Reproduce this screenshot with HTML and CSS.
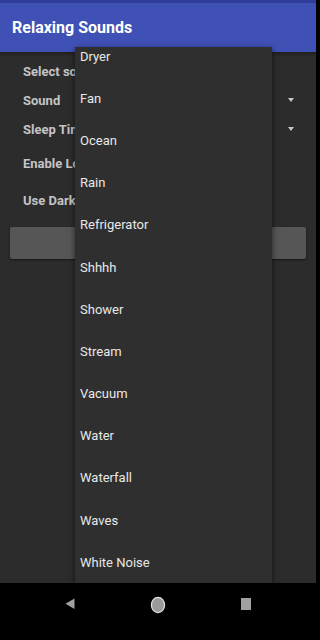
FILE: index.html
```html
<!DOCTYPE html>
<html lang="en">
<head>
  <meta charset="UTF-8" />
  <meta name="viewport" content="width=device-width, initial-scale=1.0" />
  <title>Relaxing Sounds</title>
  <link rel="stylesheet" href="styles.css">
</head>
<body>
  <div class="app">
    <div class="status"></div>
    <header class="toolbar">Relaxing Sounds</header>
    <div class="settings">
      <div class="label">Select sound and timer</div>
      <div></div>
      <div class="label">Sound</div>
      <span class="arrow"></span>
      <div class="label">Sleep Timer</div>
      <span class="arrow"></span>
      <div class="label">Enable Looping</div>
      <div></div>
      <div class="label">Use Dark Theme</div>
      <div></div>
    </div>
    <button class="play-btn"></button>

    <div class="popup">
      <ul class="sound-list">
        <li>Dryer</li>
        <li>Fan</li>
        <li>Ocean</li>
        <li>Rain</li>
        <li>Refrigerator</li>
        <li>Shhhh</li>
        <li>Shower</li>
        <li>Stream</li>
        <li>Vacuum</li>
        <li>Water</li>
        <li>Waterfall</li>
        <li>Waves</li>
        <li>White Noise</li>
      </ul>
    </div>
  </div>
  <nav class="navbar">
    <svg width="10" height="12" viewBox="0 0 10 12"><polygon points="9.5,0.5 9.5,11 0.5,5.8" fill="#a0a0a0"/></svg>
    <svg width="16" height="18" viewBox="0 0 16 18"><ellipse cx="8" cy="9" rx="6.6" ry="7.6" fill="#9a9a9a" stroke="#e0e0e0" stroke-width="1.2"/></svg>
    <svg width="10" height="12" viewBox="0 0 10 12"><rect x="0" y="0" width="10" height="12" fill="#a0a0a0"/></svg>
  </nav>
</body>
</html>
```

FILE: styles.css
```css
* { box-sizing: border-box; }
body {
  margin: 0;
  width: 320px;
  height: 640px;
  background: #000;
  font-family: Roboto, "Noto Sans", sans-serif;
  overflow: hidden;
}
.app {
  position: relative;
  width: 316px;
  height: 583px;
  background: #2c2c2c;
}
.status {
  height: 3px;
  background: #2f3d99;
}
.toolbar {
  height: 49px;
  background: #3f51b5;
  color: #fff;
  font-size: 16px;
  font-weight: 700;
  padding-left: 12px;
  display: flex;
  align-items: center;
  box-shadow: 0 2px 3px rgba(0, 0, 0, 0.3);
}
.settings {
  display: grid;
  grid-template-columns: 1fr auto;
  grid-template-rows: 28px 30px 28px 40px 34px;
  align-items: center;
  padding: 5px 22px 0 23px;
}
/* labels are cut where the open popup starts */
.label {
  color: #c4c4c4;
  font-size: 13px;
  font-weight: 700;
  white-space: nowrap;
  max-width: 52px;
  overflow: hidden;
}
.arrow {
  width: 0;
  height: 0;
  border-left: 3.5px solid transparent;
  border-right: 3.5px solid transparent;
  border-top: 4px solid #c8c8c8;
}
.play-btn {
  display: block;
  width: 296px;
  height: 32px;
  margin: 10px 10px 0;
  background: #565656;
  border: none;
  border-radius: 2px;
  box-shadow: 0 1px 2px rgba(0, 0, 0, 0.5);
}
.popup {
  position: absolute;
  left: 75px;
  top: 47px;
  width: 197px;
  bottom: 0;
  background: #2f2f2f;
  overflow: hidden;
  box-shadow: 0 2px 6px rgba(0, 0, 0, 0.6);
}
.sound-list {
  list-style: none;
  margin: -12px 0 0;
  padding: 0;
}
.sound-list li {
  height: 42.2px;
  display: flex;
  align-items: center;
  padding-left: 5px;
  color: #e8e8e8;
  font-size: 13px;
}
.navbar {
  width: 316px;
  height: 57px;
  display: flex;
  justify-content: center;
  align-items: flex-start;
  gap: 75px;
  padding-top: 13px;
}
.navbar svg:nth-child(1),
.navbar svg:nth-child(3) { margin-top: 2px; }
```
